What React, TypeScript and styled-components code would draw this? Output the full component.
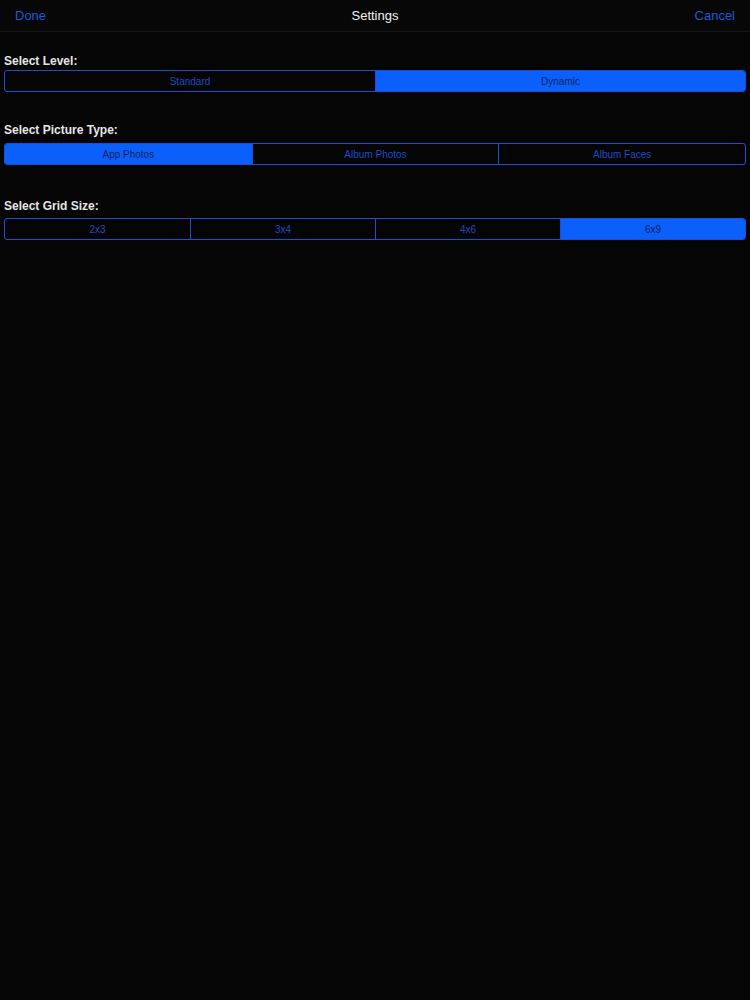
import React, { useState } from 'react';
import styled, { createGlobalStyle } from 'styled-components';

const GlobalStyle = createGlobalStyle`
  html, body {
    margin: 0;
    padding: 0;
    background: #050505;
  }
  body {
    font-family: "Liberation Sans", Arial, sans-serif;
    color: #e6e6e6;
  }
`;

const Page = styled.div`
  width: 750px;
  min-height: 1000px;
  background: #050505;
`;

const NavBar = styled.div`
  height: 32px;
  display: grid;
  grid-template-columns: 1fr auto 1fr;
  align-items: center;
  padding: 0 15px;
  background: #070707;
  border-bottom: 1px solid #161616;
  box-sizing: border-box;
`;

const NavButton = styled.span<{ $align: 'left' | 'right' }>`
  font-size: 13px;
  color: #1f5ad8;
  justify-self: ${(p) => (p.$align === 'left' ? 'start' : 'end')};
  cursor: pointer;
`;

const NavTitle = styled.span`
  font-size: 13px;
  color: #f2f2f2;
`;

const Content = styled.div`
  padding: 0 4px;
`;

const Section = styled.div<{ $top: number; $gap: number }>`
  margin-top: ${(p) => p.$top}px;
  display: flex;
  flex-direction: column;
  gap: ${(p) => p.$gap}px;
`;

const Label = styled.div`
  font-size: 12px;
  font-weight: bold;
  line-height: 14px;
  color: #e6e6e6;
`;

const Segmented = styled.div<{ $count: number }>`
  display: grid;
  grid-template-columns: repeat(${(p) => p.$count}, 1fr);
  height: 22px;
  border: 1px solid #1a4fd6;
  border-radius: 3px;
  overflow: hidden;
  box-sizing: border-box;
`;

const Segment = styled.div<{ $active: boolean }>`
  display: flex;
  align-items: center;
  justify-content: center;
  font-size: 10px;
  background: ${(p) => (p.$active ? '#0b5ffb' : 'transparent')};
  color: ${(p) => (p.$active ? '#0d2462' : '#1f4cc4')};
  border-left: 1px solid #1a4fd6;
  cursor: pointer;
  &:first-child {
    border-left: none;
  }
`;

type Group = { label: string; options: string[]; initial: number; top: number; gap: number };

const groups: Group[] = [
  { label: 'Select Level:', options: ['Standard', 'Dynamic'], initial: 1, top: 22, gap: 2 },
  { label: 'Select Picture Type:', options: ['App Photos', 'Album Photos', 'Album Faces'], initial: 0, top: 31, gap: 6 },
  { label: 'Select Grid Size:', options: ['2x3', '3x4', '4x6', '6x9'], initial: 3, top: 34, gap: 5 },
];

const SegmentGroup = ({ group }: { group: Group }) => {
  const [index, setIndex] = useState(group.initial);
  return (
    <Section $top={group.top} $gap={group.gap}>
      <Label>{group.label}</Label>
      <Segmented $count={group.options.length}>
        {group.options.map((o, i) => (
          <Segment key={o} $active={i === index} onClick={() => setIndex(i)}>
            {o}
          </Segment>
        ))}
      </Segmented>
    </Section>
  );
};

const App = () => (
  <Page>
    <GlobalStyle />
    <NavBar>
      <NavButton $align="left">Done</NavButton>
      <NavTitle>Settings</NavTitle>
      <NavButton $align="right">Cancel</NavButton>
    </NavBar>
    <Content>
      {groups.map((g) => (
        <SegmentGroup key={g.label} group={g} />
      ))}
    </Content>
  </Page>
);

export default App;
